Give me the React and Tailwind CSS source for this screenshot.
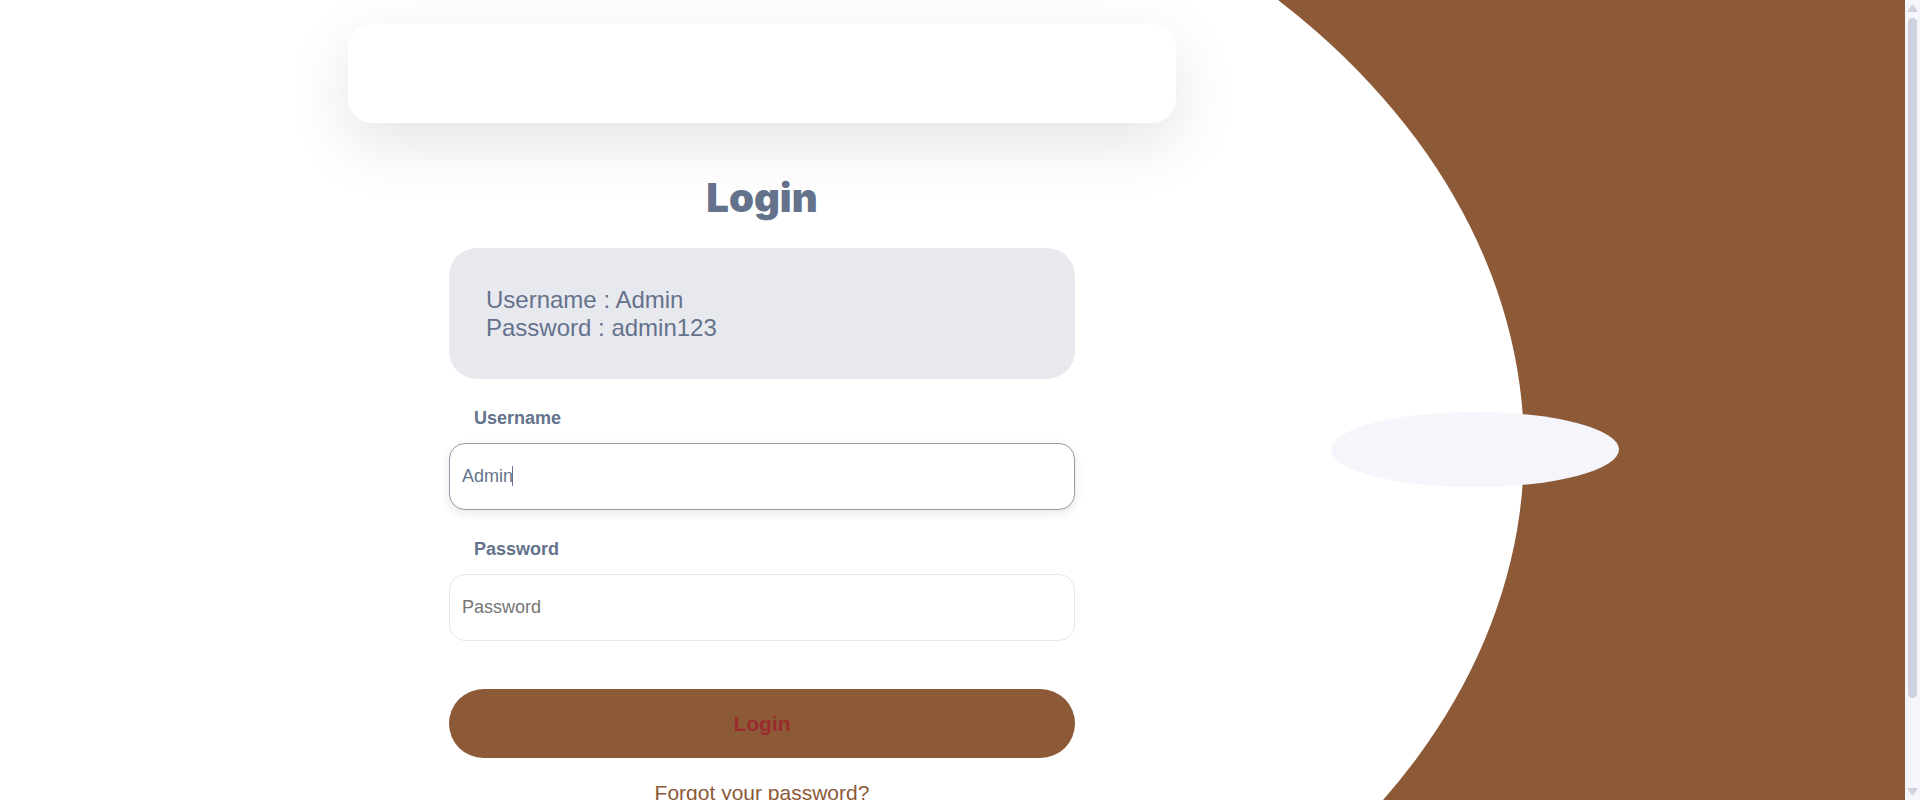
import React from "react";

function Field({ id, label, caret, className, ...props }) {
  return (
    <div className="flex flex-col gap-3.5">
      <label htmlFor={id} className="px-[25px] text-[18px] leading-[22px] font-bold">
        {label}
      </label>
      <div className="relative">
        <input
          id={id}
          className={`block h-[67px] w-full rounded-2xl border bg-white px-3 text-[18px] text-[#64728c] caret-transparent outline-none placeholder:text-[#757575] ${className}`}
          {...props}
        />
        {caret && (
          <span
            aria-hidden="true"
            className="pointer-events-none absolute top-[23px] left-[63px] h-5 w-px bg-[#64728c]"
          />
        )}
      </div>
    </div>
  );
}

function Backdrop() {
  return (
    <div aria-hidden="true" className="absolute inset-0">
      <div className="absolute top-[-209px] left-0 h-[1316px] w-4/5 rounded-[0_60%_60%_0/0_50%_50%_0] bg-white" />
      <div className="absolute top-[412px] right-[15%] h-[75px] w-72 rounded-[50%] bg-[#f6f5fb]" />
    </div>
  );
}

function ScrollBar() {
  return (
    <div
      aria-hidden="true"
      className="flex w-[15px] shrink-0 flex-col items-center gap-1.5 bg-[#f6f5fb] py-1 text-[#cdd2de]"
    >
      <svg viewBox="0 0 9 8" className="h-2 w-[9px] shrink-0" fill="currentColor">
        <path d="M4.5 0.5 L9 6 V8 H0 V6 Z" />
      </svg>
      <div className="flex w-full flex-1 justify-center">
        <div className="h-[89%] w-[9px] rounded-full bg-[#cdd2de]" />
      </div>
      <svg viewBox="0 0 9 8" className="h-2 w-[9px] shrink-0" fill="currentColor">
        <path d="M0 0 H9 V2 L4.5 7.5 L0 2 Z" />
      </svg>
    </div>
  );
}

export default function App() {
  return (
    <div className="flex h-screen overflow-hidden font-['Liberation_Sans',Arial,sans-serif] text-[#64728c]">
      <main className="relative flex-1 overflow-hidden bg-[#8c5a37]">
        <Backdrop />
        <div className="relative flex w-4/5 flex-col items-center pt-6">
          <div className="h-[99px] w-full max-w-[828px] rounded-3xl bg-white shadow-[0_20px_64px_rgba(0,0,0,0.11)]" />
          <form
            className="mt-12 flex w-full max-w-[626px] flex-col"
            onSubmit={(e) => e.preventDefault()}
          >
            <h1 className="text-center font-['Inter',sans-serif] text-[40px] leading-[54px] font-black">
              Login
            </h1>
            <div className="mt-[23px] rounded-[28px] bg-[#e8e9ee] px-[37px] pt-[38px] pb-[37px] text-2xl leading-7">
              <p>Username : Admin</p>
              <p>Password : admin123</p>
            </div>
            <div className="mt-7 flex flex-col gap-7">
              <Field
                id="username"
                label="Username"
                name="username"
                defaultValue="Admin"
                autoFocus
                caret
                className="border-[#929baa] shadow-[0_3px_10px_rgba(0,0,0,0.1)]"
              />
              <Field
                id="password"
                label="Password"
                name="password"
                type="password"
                placeholder="Password"
                className="border-[#e8e9ee]"
              />
            </div>
            <button
              type="submit"
              className="mt-12 h-[69px] rounded-full bg-[#8c5a37] text-[21px] font-bold text-[#9a2c2e]"
            >
              Login
            </button>
            <a href="#forgot" className="mt-[23px] self-center text-[21px] leading-6 text-[#8c5a37]">
              Forgot your password?
            </a>
          </form>
        </div>
      </main>
      <ScrollBar />
    </div>
  );
}
